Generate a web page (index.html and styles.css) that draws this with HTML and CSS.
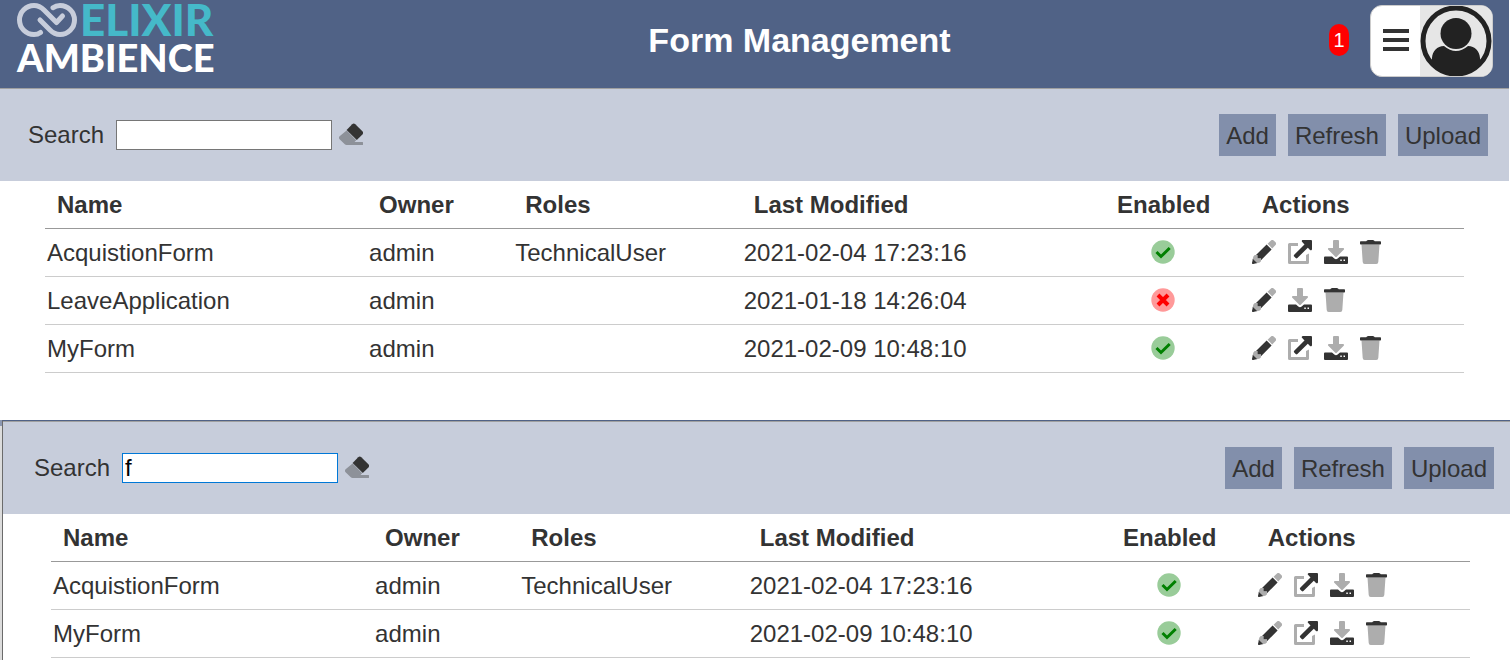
FILE: index.html
```
<!DOCTYPE html>
<html lang="en">
<head>
  <meta charset="UTF-8" />
  <title>Form Management</title>
  <link rel="stylesheet" href="styles.css">
</head>
<body>
  <!-- Icon set -->
  <svg class="icon-defs" aria-hidden="true">
    <symbol id="icon-edit" viewBox="0 0 24 24">
      <path class="tone-light" d="M15.600 3.800 18.700.7a2.300 2.300 0 0 1 3.200 0l1.400 1.400a2.300 2.300 0 0 1 0 3.200L20.200 8.400z" />
      <path class="tone-light" d="M1.500 16.200 2.800 15H5.500V18.300H9V21.200L7.800 22.500 4 23.600 .4 20z" />
      <path class="tone-dark" d="M14.600 4.400 19.600 9.400 9 20.200V18.300H5.500V15H4z" />
      <path class="tone-dark" d="M.9 19 5 23.100 1.300 24A1.100 1.100 0 0 1 0 22.800z" />
    </symbol>
    <symbol id="icon-open" viewBox="0 0 24 24">
      <path class="tone-light" d="M10 3v3H3v15h15v-6l3-1.500v9a1.500 1.500 0 0 1-1.500 1.500h-18A1.500 1.500 0 0 1 0 22.500v-18A1.500 1.500 0 0 1 1.500 3z" />
      <path class="tone-dark" d="M15 0h8a1 1 0 0 1 1 1v8c0 1.300-1.200 1.600-2 .9L19.800 7.700 9.400 18a1.200 1.200 0 0 1-1.700 0L6.200 16.500a1.200 1.200 0 0 1 0-1.700L16.500 4.400 14.200 2.100C13.300 1.200 13.800 0 15 0z" />
    </symbol>
    <symbol id="icon-download" viewBox="0 0 24 24">
      <path class="tone-light" d="M10 0h4a1 1 0 0 1 1 1v7h4c1 0 1.400 1 .7 1.700l-7 7a1 1 0 0 1-1.400 0l-7-7C3.600 9 4 8 5 8h4V1a1 1 0 0 1 1-1z" />
      <path class="tone-dark" fill-rule="evenodd" d="M1 16.500h7l2.300 2a2.500 2.500 0 0 0 3.400 0L16 16.500H23a1 1 0 0 1 1 1V23a1 1 0 0 1-1 1H1a1 1 0 0 1-1-1v-5.500a1 1 0 0 1 1-1zM16.300 19.500v1.500h1.500v-1.500zM19.500 19.500v1.500H21v-1.500z" />
    </symbol>
    <symbol id="icon-delete" viewBox="0 0 24 24">
      <path class="tone-light" d="M1.500 4.500h18l-1.200 17.600a2 2 0 0 1-2 1.900H4.700a2 2 0 0 1-2-1.900z" />
      <path class="tone-dark" d="M.7 1.200H6.200L7 .4Q7.400 0 8 0h5q.6 0 1 .4l.8.800h5.500q.7 0 .7.700v1.900q0 .7-.7.700H.7Q0 4.500 0 3.800V1.900q0-.7.7-.7z" />
    </symbol>
    <symbol id="icon-eraser" viewBox="0 0 24 24">
      <path class="tone-grey" d="M7.600 7.600 17.200 17.200 15.500 19H23.500a.5.500 0 0 1 .5.500V21.500a.5.500 0 0 1-.5.500H7.500a2.500 2.500 0 0 1-1.700-.7L.6 16.200a2.200 2.200 0 0 1 0-3z" />
      <path class="tone-dark" d="M7.600 7 13.200 1.200a2.200 2.200 0 0 1 3.100 0l7.100 7.100a2.200 2.200 0 0 1 0 3.100L17.800 17z" />
    </symbol>
    <symbol id="icon-yes" viewBox="0 0 24 24">
      <circle cx="12" cy="12" r="11.700" fill="#99cc99" />
      <path d="M5.500 12 10 16.500 18.700 8" fill="none" stroke="#008000" stroke-width="3" />
    </symbol>
    <symbol id="icon-no" viewBox="0 0 24 24">
      <circle cx="12" cy="12" r="11.700" fill="#ff9999" />
      <path d="M7 7 17 17M17 7 7 17" fill="none" stroke="#ff0000" stroke-width="4" />
    </symbol>
  </svg>

  <header class="header">
    <div class="logo">
      <svg width="220" height="80" viewBox="0 0 220 80" role="img" aria-label="Elixir Ambience">
        <path class="logo-mark" d="M40.500 32.500C38.500 34 36.500 34.500 34 34.500A14.500 14.500 0 0 1 34 5.500C38 5.500 41 7 44 10L56.500 22.500 62.500 16" />
        <path class="logo-mark" d="M53 7.700C55 6.200 57.500 5.500 60 5.500A14.500 14.500 0 0 1 60 34.500C56 34.500 53 33 50 30L40 20" />
        <text class="logo-top" x="80" y="36">ELIXIR</text>
        <text class="logo-bottom" x="17" y="72">AMBIENCE</text>
      </svg>
    </div>
    <h1 class="title">Form Management</h1>
    <span class="badge">1</span>
    <button class="user-menu" type="button" aria-label="User menu">
      <span class="bars"><i></i><i></i><i></i></span>
      <svg class="avatar" viewBox="0 0 72 70" aria-hidden="true">
        <rect width="72" height="70" fill="#e6e6e6" />
        <circle cx="36" cy="35" r="33" fill="none" stroke="#222" stroke-width="5" />
        <circle cx="36" cy="27.500" r="15.500" fill="#222" />
        <path d="M12 57V52C12.500 45 17 40 24 40Q36 50 48 40C55 40 59.500 45 60 52V57Q52 68 36 69 20 68 12 57z" fill="#222" />
      </svg>
    </button>
  </header>

  <main>
    <section class="panel">
      <div class="toolbar">
        <label for="search-all">Search</label>
        <input class="search" id="search-all" type="text" />
        <button class="icon-button clear" type="button" aria-label="Clear"><svg class="icon"><use href="#icon-eraser" /></svg></button>
        <div class="buttons">
          <button class="button" type="button">Add</button>
          <button class="button" type="button">Refresh</button>
          <button class="button" type="button">Upload</button>
        </div>
      </div>
      <table class="forms">
        <thead>
          <tr>
            <th class="col-name">Name</th>
            <th class="col-owner">Owner</th>
            <th class="col-roles">Roles</th>
            <th class="col-modified">Last Modified</th>
            <th class="col-enabled">Enabled</th>
            <th>Actions</th>
          </tr>
        </thead>
        <tbody>
          <tr>
            <td>AcquistionForm</td>
            <td>admin</td>
            <td>TechnicalUser</td>
            <td>2021-02-04 17:23:16</td>
            <td class="enabled"><svg class="icon"><use href="#icon-yes" /></svg></td>
            <td>
              <div class="actions">
                <button class="icon-button" type="button" aria-label="Edit"><svg class="icon"><use href="#icon-edit" /></svg></button>
                <button class="icon-button" type="button" aria-label="Open"><svg class="icon"><use href="#icon-open" /></svg></button>
                <button class="icon-button" type="button" aria-label="Download"><svg class="icon"><use href="#icon-download" /></svg></button>
                <button class="icon-button" type="button" aria-label="Delete"><svg class="icon"><use href="#icon-delete" /></svg></button>
              </div>
            </td>
          </tr>
          <tr>
            <td>LeaveApplication</td>
            <td>admin</td>
            <td></td>
            <td>2021-01-18 14:26:04</td>
            <td class="enabled"><svg class="icon"><use href="#icon-no" /></svg></td>
            <td>
              <div class="actions">
                <button class="icon-button" type="button" aria-label="Edit"><svg class="icon"><use href="#icon-edit" /></svg></button>
                <button class="icon-button" type="button" aria-label="Download"><svg class="icon"><use href="#icon-download" /></svg></button>
                <button class="icon-button" type="button" aria-label="Delete"><svg class="icon"><use href="#icon-delete" /></svg></button>
              </div>
            </td>
          </tr>
          <tr>
            <td>MyForm</td>
            <td>admin</td>
            <td></td>
            <td>2021-02-09 10:48:10</td>
            <td class="enabled"><svg class="icon"><use href="#icon-yes" /></svg></td>
            <td>
              <div class="actions">
                <button class="icon-button" type="button" aria-label="Edit"><svg class="icon"><use href="#icon-edit" /></svg></button>
                <button class="icon-button" type="button" aria-label="Open"><svg class="icon"><use href="#icon-open" /></svg></button>
                <button class="icon-button" type="button" aria-label="Download"><svg class="icon"><use href="#icon-download" /></svg></button>
                <button class="icon-button" type="button" aria-label="Delete"><svg class="icon"><use href="#icon-delete" /></svg></button>
              </div>
            </td>
          </tr>
        </tbody>
      </table>
    </section>

    <div class="filtered">
      <section class="panel panel-filtered">
        <div class="toolbar">
          <label for="search-filtered">Search</label>
          <input class="search search-active" id="search-filtered" type="text" value="f" />
          <button class="icon-button clear" type="button" aria-label="Clear"><svg class="icon"><use href="#icon-eraser" /></svg></button>
          <div class="buttons">
            <button class="button" type="button">Add</button>
            <button class="button" type="button">Refresh</button>
            <button class="button" type="button">Upload</button>
          </div>
        </div>
        <table class="forms">
          <thead>
            <tr>
              <th class="col-name">Name</th>
              <th class="col-owner">Owner</th>
              <th class="col-roles">Roles</th>
              <th class="col-modified">Last Modified</th>
              <th class="col-enabled">Enabled</th>
              <th>Actions</th>
            </tr>
          </thead>
          <tbody>
            <tr>
              <td>AcquistionForm</td>
              <td>admin</td>
              <td>TechnicalUser</td>
              <td>2021-02-04 17:23:16</td>
              <td class="enabled"><svg class="icon"><use href="#icon-yes" /></svg></td>
              <td>
                <div class="actions">
                  <button class="icon-button" type="button" aria-label="Edit"><svg class="icon"><use href="#icon-edit" /></svg></button>
                  <button class="icon-button" type="button" aria-label="Open"><svg class="icon"><use href="#icon-open" /></svg></button>
                  <button class="icon-button" type="button" aria-label="Download"><svg class="icon"><use href="#icon-download" /></svg></button>
                  <button class="icon-button" type="button" aria-label="Delete"><svg class="icon"><use href="#icon-delete" /></svg></button>
                </div>
              </td>
            </tr>
            <tr>
              <td>MyForm</td>
              <td>admin</td>
              <td></td>
              <td>2021-02-09 10:48:10</td>
              <td class="enabled"><svg class="icon"><use href="#icon-yes" /></svg></td>
              <td>
                <div class="actions">
                  <button class="icon-button" type="button" aria-label="Edit"><svg class="icon"><use href="#icon-edit" /></svg></button>
                  <button class="icon-button" type="button" aria-label="Open"><svg class="icon"><use href="#icon-open" /></svg></button>
                  <button class="icon-button" type="button" aria-label="Download"><svg class="icon"><use href="#icon-download" /></svg></button>
                  <button class="icon-button" type="button" aria-label="Delete"><svg class="icon"><use href="#icon-delete" /></svg></button>
                </div>
              </td>
            </tr>
          </tbody>
        </table>
      </section>
    </div>
  </main>
</body>
</html>
```
FILE: styles.css
```
/* GLOBAL STYLES */
* {
  margin: 0;
  padding: 0;
  box-sizing: border-box;
}

body {
  background: #fff;
  color: #333;
  font-family: "Liberation Sans", Arial, sans-serif;
  font-size: 24px;
  line-height: 28px;
}

button,
input {
  font: inherit;
  color: inherit;
}

button {
  border: none;
  background: none;
  cursor: pointer;
}

/* ICONS */
.icon-defs {
  display: none;
}

.icon {
  display: block;
  width: 24px;
  height: 24px;
}

.tone-dark {
  fill: #333;
}

.tone-light {
  fill: #adadad;
}

.tone-grey {
  fill: #8d9199;
}

.icon-button {
  display: block;
}

/* HEADER */
.header {
  display: flex;
  height: 89px;
  margin-right: 1px;
  padding-right: 16px;
  background: #506286;
  border-bottom: 1px solid #a0a0a0;
}

.logo {
  width: 270px;
}

.logo svg {
  display: block;
  overflow: visible;
}

.logo-mark {
  fill: none;
  stroke: #c7cddb;
  stroke-width: 5;
  stroke-linecap: round;
  stroke-linejoin: round;
}

.logo-top,
.logo-bottom {
  font-family: Lato, sans-serif;
  font-weight: 900;
}

.logo-top {
  font-size: 44px;
  fill: #45b9c9;
}

.logo-bottom {
  font-size: 38px;
  fill: #fff;
}

.title {
  flex: 1;
  color: #fff;
  font-size: 34px;
  line-height: 80px;
  text-align: center;
}

.badge {
  width: 20px;
  height: 32px;
  margin: 24px 21px 0 0;
  border-radius: 10px;
  background: #f00;
  color: #fff;
  font-size: 20px;
  line-height: 32px;
  text-align: center;
}

.user-menu {
  display: flex;
  align-items: center;
  height: 72px;
  margin-top: 5px;
  border: 1px solid #ccc;
  border-radius: 12px;
  background: #fff;
  overflow: hidden;
}

.bars {
  display: flex;
  flex-direction: column;
  gap: 5px;
  width: 49px;
  padding: 0 11px 2px 12px;
}

.bars i {
  height: 4px;
  background: #333;
}

.avatar {
  width: 72px;
  height: 70px;
}

/* PANELS */
.panel {
  margin-right: 1px;
  padding-bottom: 47px;
}

.toolbar {
  display: flex;
  align-items: center;
  height: 92px;
  padding: 0 21px 0 28px;
  background: #c7cddb;
}

.search {
  width: 216px;
  height: 30px;
  margin-left: 12px;
  padding: 0 2px;
  border: 1px solid #767676;
  background: #fff;
  color: #000;
  outline: none;
}

.search-active,
.search:focus {
  border-color: #0078d7;
}

.clear {
  margin-left: 7px;
}

.buttons {
  display: flex;
  gap: 12px;
  margin-left: auto;
}

.button {
  height: 42px;
  padding: 2px 7px 0;
  background: #828fab;
}

.filtered {
  padding-left: 2px;
  background: linear-gradient(#8b97b1 6px, #dcdcdc 6px);
}

.panel-filtered {
  margin-right: 0;
  padding-bottom: 2px;
  border-top: 1px solid #506286;
  border-left: 1px solid #6b6b6b;
  background: #fff;
}

.panel-filtered .toolbar {
  height: 93px;
  padding: 0 16px 0 31px;
  border-top: 1px solid #a0a0a0;
}

/* FORMS TABLE */
.forms {
  width: calc(100% - 90px);
  margin: 0 45px;
  border-collapse: separate;
  border-spacing: 0;
  table-layout: fixed;
}

.panel-filtered .forms {
  width: calc(100% - 88px);
  margin: 0 40px 0 48px;
}

.forms th,
.forms td {
  height: 48px;
  padding-left: 2px;
  border-bottom: 1px solid #ccc;
  text-align: left;
  white-space: nowrap;
}

.forms th {
  padding-left: 12px;
  border-color: #999;
}

.forms .enabled {
  padding: 0 0 2px 46px;
}

.col-name {
  width: 22.7%;
}

.col-owner {
  width: 10.3%;
}

.col-roles {
  width: 16.1%;
}

.col-modified {
  width: 25.6%;
}

.col-enabled {
  width: 10.2%;
}

.actions {
  display: flex;
  gap: 12px;
  padding-bottom: 2px;
}
```
